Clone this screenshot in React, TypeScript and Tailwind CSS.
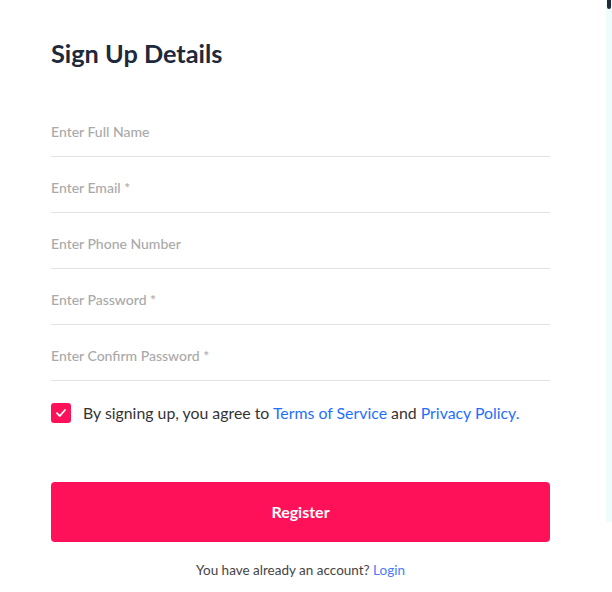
import React from "react";

const fields = [
  "Enter Full Name",
  "Enter Email *",
  "Enter Phone Number",
  "Enter Password *",
  "Enter Confirm Password *",
];

export default function App() {
  return (
    <div className="flex w-[612px] h-[592px] bg-white overflow-hidden">
      <div className="w-[606px] pl-[51px] pr-[56px] flex flex-col">
        <h1
          className="mt-[37px] text-[25.3px] leading-[32px] font-bold text-[#1e293b]"
          style={{ fontFamily: "Lato, sans-serif" }}
        >
          Sign Up Details
        </h1>
        <div className="mt-[32px] flex flex-col">
          {fields.map((f) => (
            <div
              key={f}
              className="h-[56px] border-b border-[#e2e2e2] flex items-center pt-[6px]"
            >
              <input
                placeholder={f}
                className="w-full outline-none bg-transparent text-[14px] font-medium text-[#333] placeholder:text-[#a9a9a9]"
                style={{ fontFamily: "Lato, sans-serif" }}
              />
            </div>
          ))}
        </div>
        <div className="mt-[20px] flex items-center gap-[12px]" style={{ fontFamily: "Lato, sans-serif" }}>
          <div className="w-[20px] h-[20px] rounded-[3px] bg-[#fe1158] flex items-center justify-center shrink-0">
            <svg width="12" height="12" viewBox="0 0 12 12" fill="none">
              <path d="M2 6.2 L4.8 9 L10 3" stroke="white" strokeWidth="1.8" strokeLinecap="round" strokeLinejoin="round" />
            </svg>
          </div>
          <p className="text-[15.85px] text-[#333]">
            By signing up, you agree to{" "}
            <span className="text-[#1e6fff]">Terms of Service</span> and{" "}
            <span className="text-[#1e6fff]">Privacy Policy.</span>
          </p>
        </div>
        <button
          className="mt-[57px] h-[60px] w-full rounded-[4px] bg-[#fe1158] text-white text-[16px] font-bold"
          style={{ fontFamily: "Lato, sans-serif" }}
        >
          Register
        </button>
        <p
          className="mt-[18px] text-center text-[13.5px] text-[#444]"
          style={{ fontFamily: "Lato, sans-serif" }}
        >
          You have already an account? <span className="text-[#4a7cf7]">Login</span>
        </p>
      </div>
      <div className="relative flex-1 h-[522px] bg-[#eefcfc]">
        <div className="absolute left-[1px] top-0 w-[4px] h-[9px] bg-[#1f2a3a] rounded-b-[2px]" />
      </div>
    </div>
  );
}
